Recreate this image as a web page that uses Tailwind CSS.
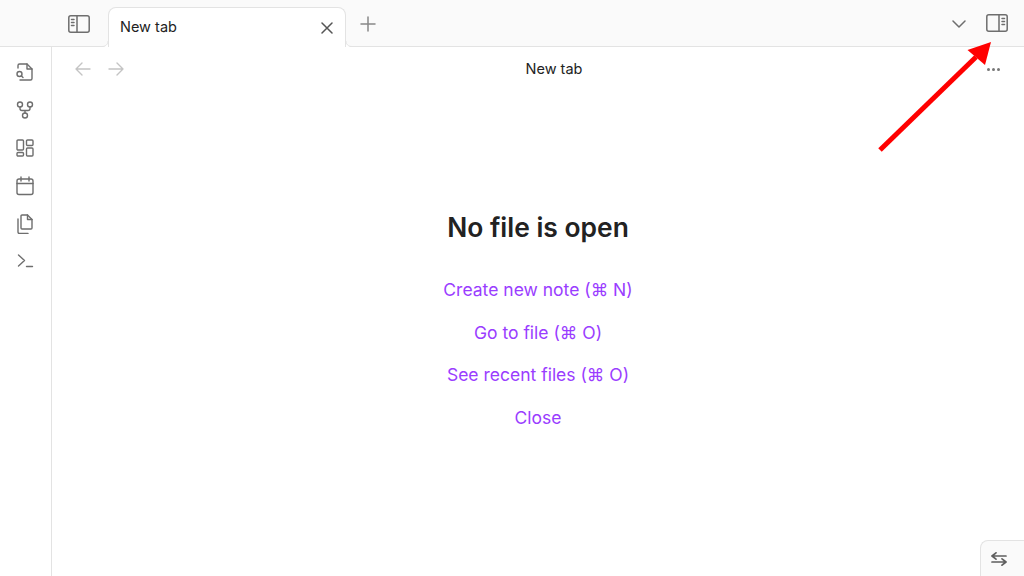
<!DOCTYPE html>
<html lang="en">
<head>
  <meta charset="UTF-8">
  <title>New tab</title>
  <script src="https://cdn.jsdelivr.net/npm/@tailwindcss/browser@4"></script>
</head>
<body class="bg-white">
  <div class="relative w-[1024px] h-[576px] overflow-hidden flex flex-col font-['Inter','Liberation_Sans',sans-serif] text-[#222]">

    <!-- tab bar -->
    <header class="h-[47px] shrink-0 flex items-end bg-[#fafafa] border-b border-[#e3e3e3]">
      <div class="w-[108px] h-full flex items-center shrink-0 pl-[68px]">
        <svg class="w-[22px] h-[18px] mt-[1px]" viewBox="0 0 22 18" fill="none" stroke="#6e6e6e" stroke-width="1.5" stroke-linecap="round">
          <rect x="0.8" y="0.8" width="20.4" height="16.4" rx="2"/>
          <path d="M9 1v16M3.5 4.5h2.5M3.5 7.5h2.5M3.5 10.5h2.5"/>
        </svg>
      </div>

      <div class="relative w-[238px] h-[40px] -mb-px shrink-0 flex items-center justify-between pl-[11px] pr-[12.500px] bg-white border border-b-0 border-[#e3e3e3] rounded-t-lg">
        <svg class="absolute -left-[7px] bottom-0 w-[6px] h-[6px]" viewBox="0 0 6 6" fill="none"><path d="M6 0V6H0C3.5 6 6 3.5 6 0Z" fill="#fff"/><path d="M6 0C6 3.5 3.5 5.5 0 5.5" stroke="#e3e3e3"/></svg>
        <svg class="absolute -right-[7px] bottom-0 w-[6px] h-[6px]" viewBox="0 0 6 6" fill="none"><path d="M0 0V6H6C2.5 6 0 3.5 0 0Z" fill="#fff"/><path d="M0 0C0 3.5 2.5 5.5 6 5.5" stroke="#e3e3e3"/></svg>
        <span class="text-[14.5px] leading-none -mt-[1px]">New tab</span>
        <svg class="w-[12px] h-[12px]" viewBox="0 0 12 12" fill="none" stroke="#555" stroke-width="1.5" stroke-linecap="round"><path d="M1 1l10 10M11 1L1 11"/></svg>
      </div>

      <div class="h-full flex items-center pl-[14px]">
        <svg class="w-[16px] h-[16px] mt-[2px]" viewBox="0 0 16 16" fill="none" stroke="#888" stroke-width="1.5" stroke-linecap="round"><path d="M8 1v14M1 8h14"/></svg>
      </div>

      <div class="ml-auto h-full flex items-center pr-[16px] gap-[20px]">
        <svg class="w-[14px] h-[8px] mt-[1px]" viewBox="0 0 14 8" fill="none" stroke="#6e6e6e" stroke-width="1.5" stroke-linecap="round" stroke-linejoin="round"><path d="M1 1l6 6 6-6"/></svg>
        <svg class="w-[22px] h-[18px]" viewBox="0 0 22 18" fill="none" stroke="#6e6e6e" stroke-width="1.5" stroke-linecap="round">
          <rect x="0.8" y="0.8" width="20.4" height="16.4" rx="2"/>
          <path d="M13 1v16M16 4.5h2.5M16 7.5h2.5M16 10.5h2.5"/>
        </svg>
      </div>
    </header>

    <div class="flex-1 flex min-h-0">
      <!-- ribbon -->
      <aside class="w-[52px] shrink-0 border-r border-[#e3e3e3] flex flex-col items-center pt-[15px] pr-[1px] gap-[18px]">
        <svg class="w-[20px] h-[20px]" viewBox="0 0 20 20" fill="none" stroke="#6e6e6e" stroke-width="1.4" stroke-linecap="round" stroke-linejoin="round">
          <path d="M3 6V3.5A1.5 1.5 0 0 1 4.5 2H12l5 5v9.5a1.5 1.5 0 0 1-1.500 1.500H5"/>
          <path d="M12 2v5h5"/>
          <circle cx="4.500" cy="12" r="2.500"/>
          <path d="M6.500 14l1.500 1.500"/>
        </svg>
        <svg class="w-[20px] h-[20px]" viewBox="0 0 20 20" fill="none" stroke="#6e6e6e" stroke-width="1.4" stroke-linecap="round" stroke-linejoin="round">
          <circle cx="5" cy="4.500" r="2.500"/>
          <circle cx="15" cy="4.500" r="2.500"/>
          <circle cx="10" cy="15.500" r="2.500"/>
          <path d="M5 7v1.500A2 2 0 0 0 7 10.500h6a2 2 0 0 0 2-2V7M10 10.500V13"/>
        </svg>
        <svg class="w-[20px] h-[20px]" viewBox="0 0 20 20" fill="none" stroke="#6e6e6e" stroke-width="1.4" stroke-linejoin="round">
          <rect x="2" y="2" width="6.500" height="10" rx="1"/>
          <rect x="11.500" y="2" width="6.500" height="5.500" rx="1"/>
          <rect x="11.500" y="10" width="6.500" height="8" rx="1"/>
          <rect x="2" y="14.500" width="6.500" height="3.500" rx="1"/>
        </svg>
        <svg class="w-[20px] h-[20px]" viewBox="0 0 20 20" fill="none" stroke="#6e6e6e" stroke-width="1.4" stroke-linecap="round" stroke-linejoin="round">
          <rect x="2" y="3" width="16" height="15.500" rx="2"/>
          <path d="M6 1v4M14 1v4M2 7.500h16"/>
        </svg>
        <svg class="w-[20px] h-[20px]" viewBox="0 0 20 20" fill="none" stroke="#6e6e6e" stroke-width="1.4" stroke-linecap="round" stroke-linejoin="round">
          <path d="M7 1h5.500L17 5.500V14a1 1 0 0 1-1 1H7a1 1 0 0 1-1-1V2a1 1 0 0 1 1-1Z"/>
          <path d="M12.500 1v4.500H17"/>
          <path d="M3 5v13a1.500 1.500 0 0 0 1.500 1.500H13"/>
        </svg>
        <svg class="w-[20px] h-[20px] -mt-[1px]" viewBox="0 0 20 20" fill="none" stroke="#6e6e6e" stroke-width="1.4" stroke-linecap="round" stroke-linejoin="round">
          <path d="M3.500 4l6 5.500-6 5.500M11.500 15.500h6"/>
        </svg>
      </aside>

      <main class="relative flex-1 flex flex-col">
        <!-- view header -->
        <div class="h-[44px] shrink-0 flex items-center pl-[23px] pr-[24px]">
          <div class="flex items-center gap-[17px]">
            <svg class="w-[16px] h-[14px]" viewBox="0 0 16 14" fill="none" stroke="#c4c4c4" stroke-width="1.4" stroke-linecap="round" stroke-linejoin="round"><path d="M15 7H1M7 1L1 7l6 6"/></svg>
            <svg class="w-[16px] h-[14px]" viewBox="0 0 16 14" fill="none" stroke="#c4c4c4" stroke-width="1.4" stroke-linecap="round" stroke-linejoin="round"><path d="M1 7h14M9 1l6 6-6 6"/></svg>
          </div>
          <span class="flex-1 text-center text-[14.500px] leading-none pr-[3px]">New tab</span>
          <div class="flex items-center gap-[2px] pt-[1px]">
            <span class="w-[3px] h-[3px] rounded-full bg-[#777]"></span>
            <span class="w-[3px] h-[3px] rounded-full bg-[#777]"></span>
            <span class="w-[3px] h-[3px] rounded-full bg-[#777]"></span>
          </div>
        </div>

        <!-- empty state -->
        <div class="flex flex-col items-center pt-[120px]">
          <h1 class="text-[26.400px] leading-[32px] font-semibold mb-[33px]">No file is open</h1>
          <div class="flex flex-col items-center gap-[15.670px] text-[17.500px] leading-[27px] text-[#9a3dff] font-['Inter','DejaVu_Sans',sans-serif]">
            <a>Create new note (⌘ N)</a>
            <a>Go to file (⌘ O)</a>
            <a>See recent files (⌘ O)</a>
            <a>Close</a>
          </div>
        </div>

        <!-- status corner -->
        <div class="absolute right-0 bottom-0 w-[44px] h-[36px] bg-[#fafafa] border-t border-l border-[#e3e3e3] rounded-tl-lg flex items-center justify-center pr-[8px]">
          <svg class="w-[16px] h-[14px]" viewBox="0 0 16 14" fill="none" stroke="#5f5f5f" stroke-width="1.7" stroke-linecap="round" stroke-linejoin="round"><path d="M15 4H1M5 0.800L1 4l4 3.200M1 10h14M11 6.800l4 3.200-4 3.200"/></svg>
        </div>
      </main>
    </div>

    <!-- annotation arrow -->
    <svg class="absolute inset-0 w-[1024px] h-[576px] pointer-events-none" viewBox="0 0 1024 576" fill="none">
      <path d="M880 150L976 57" stroke="#ff0000" stroke-width="5"/>
      <path d="M991 42L967.500 50L985 65Z" fill="#ff0000"/>
    </svg>
  </div>
</body>
</html>
